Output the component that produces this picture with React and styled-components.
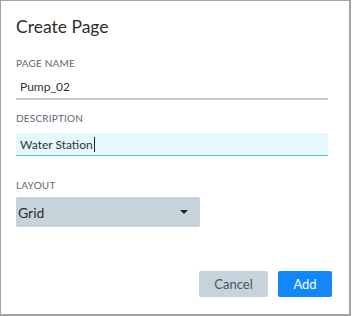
import React from "react";
import styled, { createGlobalStyle } from "styled-components";

const Global = createGlobalStyle`
  html, body { margin: 0; padding: 0; background: #fff; }
  body { font-family: Lato, "Noto Sans", sans-serif; }
  * { box-sizing: border-box; }
`;

const Dialog = styled.div`
  width: 351px;
  height: 316px;
  border: 1px solid #a3a3a3;
  border-right-width: 2px;
  border-bottom-width: 2px;
  background: #fff;
  padding: 15px 17px 0 15px;
  display: flex;
  flex-direction: column;
`;

const Title = styled.h1`
  margin: 0;
  font-size: 17.5px;
  font-weight: 400;
  color: #2d2d2d;
  line-height: 22px;
`;

const Field = styled.div`
  display: flex;
  flex-direction: column;
  margin-top: ${(p) => p.$top}px;
  margin-right: 4px;
`;

const Label = styled.label`
  font-size: 10px;
  color: #5b6874;
  text-transform: uppercase;
  letter-spacing: 0.2px;
  line-height: 12px;
`;

const TextBox = styled.div`
  height: ${(p) => (p.$focused ? 23 : 25)}px;
  margin-top: ${(p) => (p.$focused ? 9 : 6)}px;
  padding: 0 4px;
  display: flex;
  align-items: center;
  font-size: 12px;
  color: #333;
  background: ${(p) => (p.$focused ? "#e5f9fd" : "transparent")};
  border-bottom: ${(p) => (p.$focused ? "1px solid #5cbfc9" : "2px solid #c9c9c9")};
`;

const Caret = styled.span`
  display: inline-block;
  width: 1px;
  height: 15px;
  background: #222;
  margin-left: 1px;
`;

const Select = styled.div`
  width: 184px;
  height: 30px;
  margin-top: 6px;
  background: #c6d3db;
  border-radius: 2px;
  display: flex;
  align-items: center;
  justify-content: space-between;
  padding: 0 12px 0 2px;
  font-size: 14px;
  color: #2d2d2d;
`;

const Arrow = styled.span`
  width: 0;
  height: 0;
  border-left: 4px solid transparent;
  border-right: 4px solid transparent;
  border-top: 4px solid #222;
`;

const Footer = styled.div`
  display: flex;
  justify-content: flex-end;
  gap: 10px;
  margin-top: 44px;
`;

const Button = styled.button`
  height: 26px;
  padding: 0;
  width: ${(p) => p.$w}px;
  border: none;
  border-radius: 2px;
  font-family: inherit;
  font-size: 13px;
  background: ${(p) => (p.$primary ? "#1287f7" : "#c6d3db")};
  color: ${(p) => (p.$primary ? "#fff" : "#4a5560")};
`;

export default function App() {
  return (
    <>
      <Global />
      <Dialog>
        <Title>Create Page</Title>
        <Field $top={19}>
          <Label>Page Name</Label>
          <TextBox>Pump_02</TextBox>
        </Field>
        <Field $top={12}>
          <Label>Description</Label>
          <TextBox $focused>
            Water Station<Caret />
          </TextBox>
        </Field>
        <Field $top={23}>
          <Label>Layout</Label>
          <Select>
            <span>Grid</span>
            <Arrow />
          </Select>
        </Field>
        <Footer>
          <Button $w={69}>Cancel</Button>
          <Button $primary $w={54}>Add</Button>
        </Footer>
      </Dialog>
    </>
  );
}
